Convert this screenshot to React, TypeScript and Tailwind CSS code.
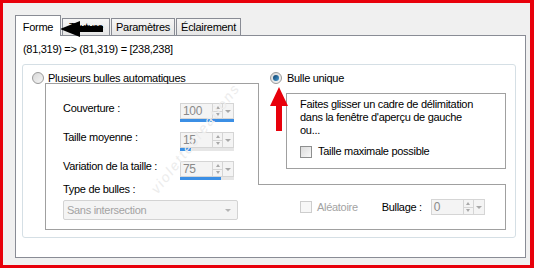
import React from 'react';

const Spin = ({ value, pct, bar = true }: { value: string; pct: number; bar?: boolean }) => (
  <div className="w-[54px]">
    <div className="flex h-[16px] border border-[#d5d5d5] bg-[#f4f4f4]">
      <div className="flex-1 pl-[2px] leading-[14px] text-[#8a8a8a] text-[12px]">{value}</div>
      <div className="flex w-[10px] flex-col border-l border-[#d5d5d5]">
        <div className="flex flex-1 items-center justify-center border-b border-[#d5d5d5]">
          <div className="h-0 w-0 border-x-[2.5px] border-b-[3px] border-x-transparent border-b-[#a8a8a8]" />
        </div>
        <div className="flex flex-1 items-center justify-center">
          <div className="h-0 w-0 border-x-[2.5px] border-t-[3px] border-x-transparent border-t-[#a8a8a8]" />
        </div>
      </div>
      <div className="flex w-[11px] items-center justify-center border-l border-[#d5d5d5]">
        <div className="h-0 w-0 border-x-[3px] border-t-[3px] border-x-transparent border-t-[#a8a8a8]" />
      </div>
    </div>
    {bar && (
      <div className="h-[3px] w-[54px] bg-[#e6e6e6]">
        <div className="h-full bg-[#3b8fe5]" style={{ width: `${pct}%` }} />
      </div>
    )}
  </div>
);

const Radio = ({ checked }: { checked?: boolean }) => (
  <div className="flex h-[12px] w-[12px] items-center justify-center rounded-full border border-[#9a9a9a] bg-gradient-to-br from-[#d8d8d8] to-[#f6f6f6]">
    {checked && <div className="h-[6px] w-[6px] rounded-full bg-gradient-to-br from-[#0d3f6b] to-[#4a9fd6]" />}
  </div>
);

const Check = ({ disabled }: { disabled?: boolean }) => (
  <div
    className={`h-[12px] w-[12px] border ${
      disabled ? 'border-[#cdcdcd] bg-[#f7f7f7]' : 'border-[#8e8f8f] bg-gradient-to-br from-[#dcdcdc] to-[#f8f8f8]'
    }`}
  />
);

export default function App() {
  return (
    <div className="relative box-border h-[268px] w-[534px] overflow-hidden border-t-[3px] border-l-[3px] border-r-[4px] border-b-[3px] border-[#e8000b] bg-[#f0f0f0] font-['Liberation_Sans',Arial,sans-serif] text-[11px] tracking-[-0.3px] text-black">
      {/* Tabs */}
      <div className="ml-[12px] mt-[12px] flex h-[21px] items-end">
        <div className="relative z-10 flex h-[21px] w-[46px] items-start justify-center border border-b-0 border-[#898c95] bg-white pt-[3px]">
          Forme
        </div>
        <div className="mb-px ml-px flex h-[17px] w-[48px] items-center justify-center border border-b-0 border-[#898c95] bg-gradient-to-b from-[#f6f6f6] to-[#e6e6e6]">
          Texture
        </div>
        <div className="mb-px ml-px flex h-[17px] w-[64px] items-center justify-center border border-b-0 border-[#898c95] bg-gradient-to-b from-[#f6f6f6] to-[#e6e6e6]">
          Paramètres
        </div>
        <div className="mb-px ml-px flex h-[17px] w-[65px] items-center justify-center border border-b-0 border-[#898c95] bg-gradient-to-b from-[#f6f6f6] to-[#e6e6e6]">
          Éclairement
        </div>
      </div>

      {/* Panel */}
      <div className="-mt-px ml-[12px] h-[223px] w-[511px] border border-[#898c95] bg-white pl-[7px] pt-[6px]">
        <div className="h-[14px] leading-[14px]">(81,319) =&gt; (81,319) = [238,238]</div>

        {/* Outer group */}
        <div className="ml-[-1px] mt-[8px] flex h-[174px] w-[494px] rounded-[3px] border border-[#d5dfe5]">
          {/* Left column */}
          <div className="w-[236px]">
            <div className="ml-[9px] mt-[7px] flex h-[12px] items-center gap-[4px]">
              <Radio />
              <span>Plusieurs bulles automatiques</span>
            </div>
            <div className="-mt-px ml-[22px] h-[147px] w-[214px] border border-[#a0a0a0] pl-[17px]">
              <div className="mt-[17px] flex h-[22px] justify-between pr-[24px]">
                <span className="leading-[14px]">Couverture :</span>
                <div className="mt-[2px]">
                  <Spin value="100" pct={100} />
                </div>
              </div>
              <div className="mt-[7px] flex h-[22px] justify-between pr-[24px]">
                <span className="leading-[14px]">Taille moyenne :</span>
                <div className="mt-[2px]">
                  <Spin value="15" pct={20} />
                </div>
              </div>
              <div className="mt-[7px] flex h-[22px] justify-between pr-[24px]">
                <span className="leading-[14px]">Variation de la taille :</span>
                <div className="mt-[2px]">
                  <Spin value="75" pct={76} />
                </div>
              </div>
              <div className="mt-[1px] leading-[14px]">Type de bulles :</div>
              <div className="mt-[4px] flex h-[20px] w-[175px] items-center justify-between rounded-[2px] border border-[#d3d3d3] bg-[#f4f4f4] pl-[3px] pr-[6px] text-[#a3a3a3]">
                <span>Sans intersection</span>
                <div className="h-0 w-0 border-x-[3px] border-t-[3px] border-x-transparent border-t-[#b5b5b5]" />
              </div>
            </div>
          </div>

          {/* Right column */}
          <div className="flex-1">
            <div className="ml-[11px] mt-[7px] flex h-[12px] items-center gap-[5px]">
              <Radio checked />
              <span>Bulle unique</span>
            </div>
            <div className="ml-[27px] mt-[9px] h-[76px] w-[220px] border border-[#a0a0a0] pl-[13px] pt-[4px] leading-[13px]">
              <div>Faites glisser un cadre de délimitation</div>
              <div>dans la fenêtre d'aperçu de gauche</div>
              <div>ou...</div>
              <div className="mt-[8px] flex items-center gap-[6px]">
                <Check />
                <span>Taille maximale possible</span>
              </div>
            </div>
            <div className="-ml-px mt-[15px] flex h-[46px] w-[248px] items-center border border-l-0 border-[#a0a0a0] bg-white pl-[42px]">
              <Check disabled />
              <span className="ml-[5px] text-[#a3a3a3]">Aléatoire</span>
              <span className="ml-[24px]">Bullage :</span>
              <div className="ml-[9px]">
                <Spin value="0" pct={0} bar={false} />
              </div>
            </div>
          </div>
        </div>
      </div>

      {/* Watermark */}
      <div className="pointer-events-none absolute left-[125px] top-[125px] -rotate-[52deg] text-[14px] italic tracking-[2px] text-[#ececec]">
        violettecreations
      </div>

      {/* Black arrow */}
      <svg className="absolute left-[54px] top-[15px]" width="50" height="22" viewBox="0 0 50 22">
        <polygon points="3,11 23,3 23,8 46,8 46,14 23,14 23,19" fill="#000" />
      </svg>

      {/* Red arrow */}
      <svg className="absolute left-[263px] top-[83px]" width="26" height="48" viewBox="0 0 26 48">
        <polygon points="13,1 22,20 16,20 16,45 10,45 10,20 4,20" fill="#e8000b" />
      </svg>
    </div>
  );
}
